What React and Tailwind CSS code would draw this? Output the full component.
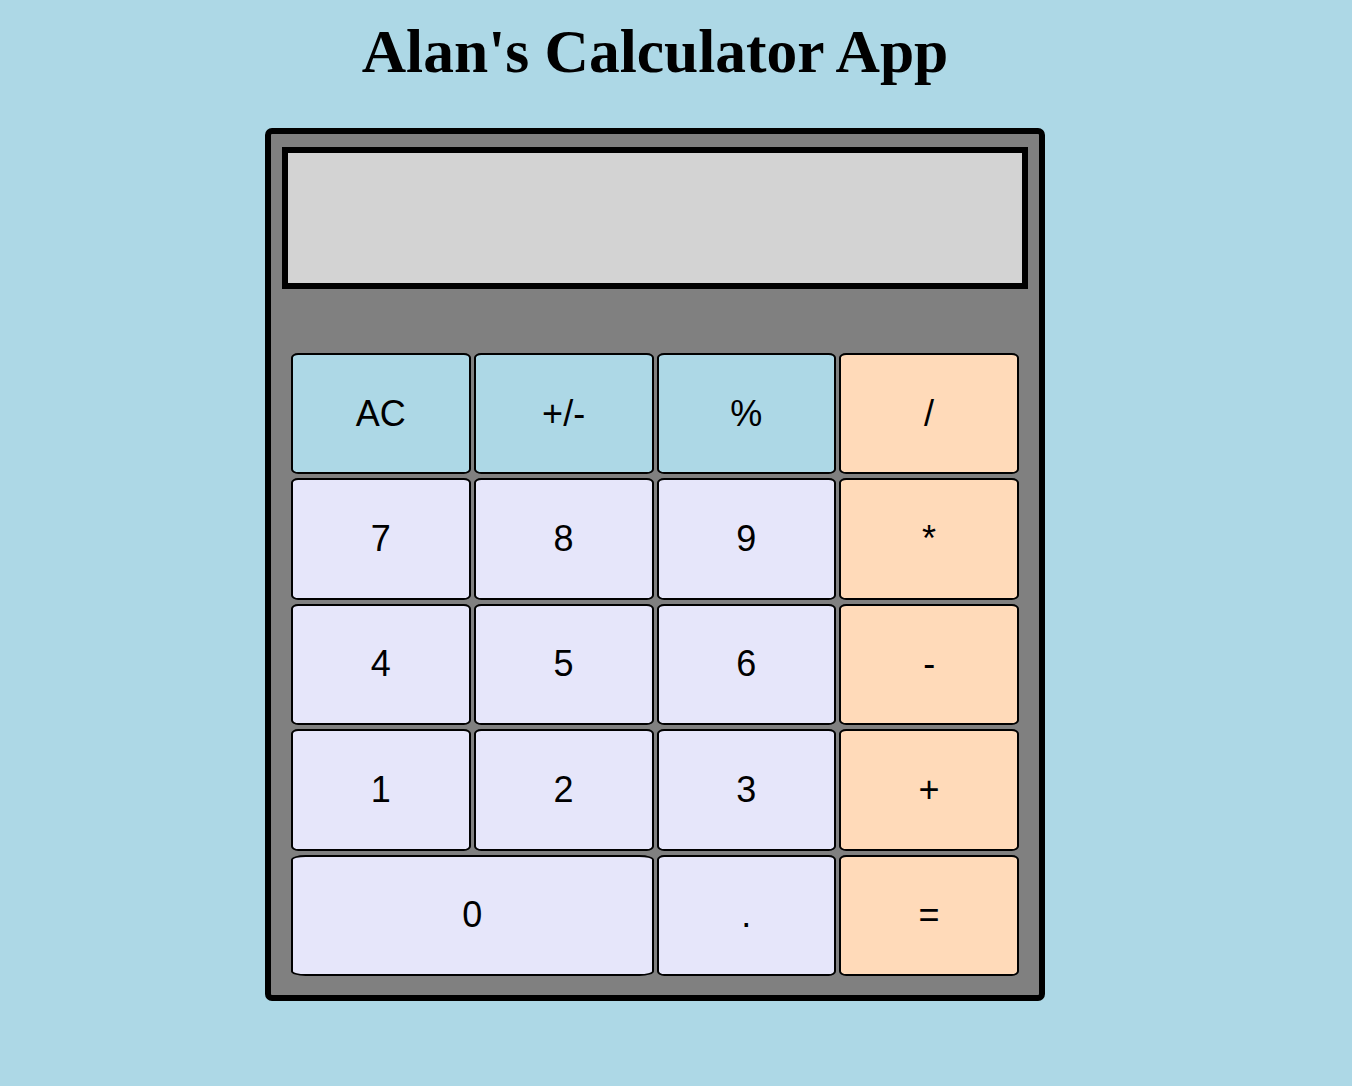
export default function App() {
  const btn = "flex items-center justify-center border-2 border-black rounded-[4%] text-[36px] text-black";
  const top = btn + " bg-[#add8e6]";
  const num = btn + " bg-[#e6e6fa]";
  const op = btn + " bg-[#ffdab9]";
  return (
    <div className="min-h-[1086px] w-full bg-[#add8e6] flex flex-col items-center pr-[42px]" style={{ fontFamily: '"Liberation Sans", Arial, sans-serif' }}>
      <h1 className="mt-[16px] text-[61.5px] leading-[70px] font-bold text-black" style={{ fontFamily: '"Liberation Serif", "Times New Roman", serif' }}>
        Alan's Calculator App
      </h1>
      <div className="mt-[42px] w-[780px] border-[6px] border-black rounded-[7px] bg-[#808080] pt-[13px] px-[11px] pb-[19px]">
        <div className="h-[142px] border-[6px] border-black bg-[#d3d3d3]"></div>
        <div className="mt-[64px] mx-[9px] grid grid-cols-4 gap-x-[3px] gap-y-[4px] auto-rows-[121.4px]">
          <div className={top}>AC</div>
          <div className={top}>+/-</div>
          <div className={top}>%</div>
          <div className={op}>/</div>
          <div className={num}>7</div>
          <div className={num}>8</div>
          <div className={num}>9</div>
          <div className={op}>*</div>
          <div className={num}>4</div>
          <div className={num}>5</div>
          <div className={num}>6</div>
          <div className={op}>-</div>
          <div className={num}>1</div>
          <div className={num}>2</div>
          <div className={num}>3</div>
          <div className={op}>+</div>
          <div className={num + " col-span-2"}>0</div>
          <div className={num}>.</div>
          <div className={op}>=</div>
        </div>
      </div>
    </div>
  );
}
